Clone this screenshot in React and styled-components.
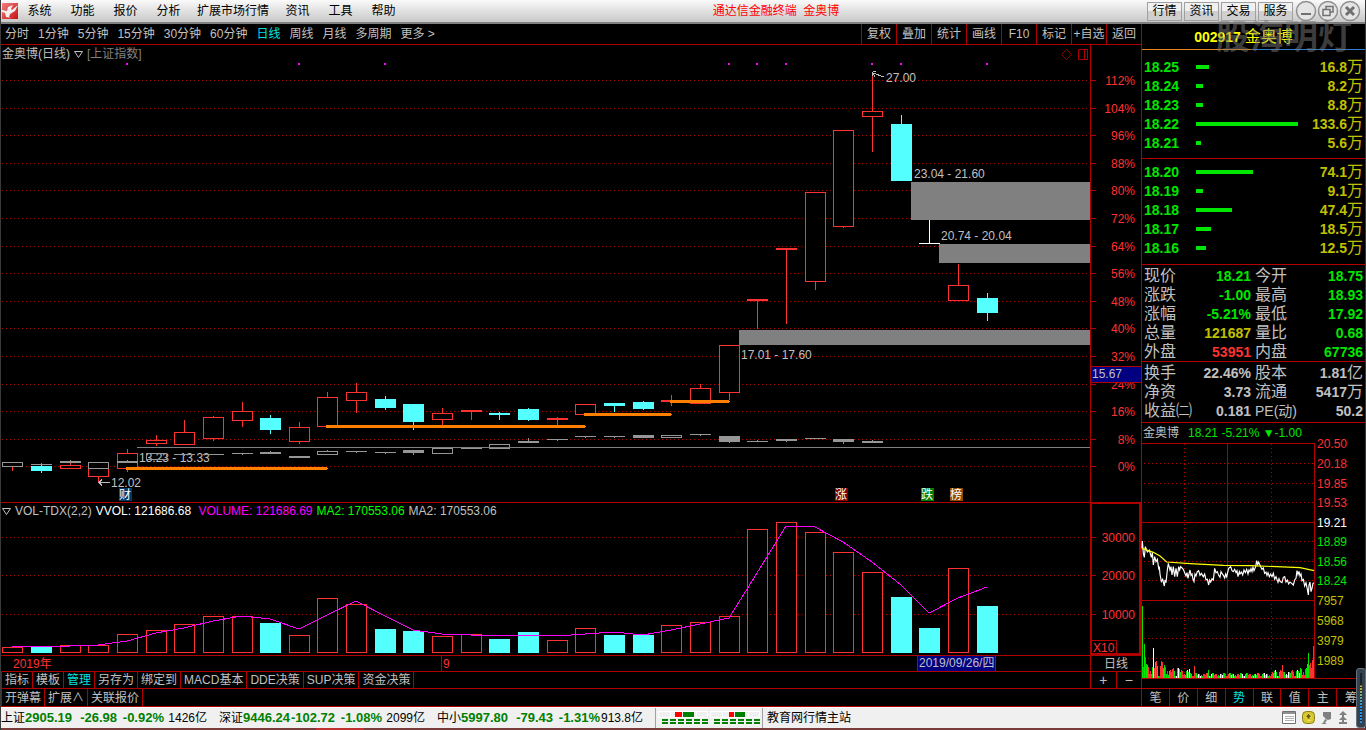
import React, { useState } from 'react';
import styled, { createGlobalStyle } from 'styled-components';

const LINE = '#b00000';
const RED = '#ff3232';
const CYAN = '#54ffff';
const TEXT = '#c0c0c0';
const GREEN = '#00e600';
const YELLOW = '#c0c000';

const GlobalStyle = createGlobalStyle`
  * { box-sizing: border-box; }
  body {
    margin: 0;
    background: #000;
    color: ${TEXT};
    font-family: "Liberation Sans", "Noto Sans CJK SC", sans-serif;
    font-size: 12px;
    line-height: 16px;
  }
  button {
    margin: 0;
    padding: 0;
    border: 0;
    background: none;
    color: inherit;
    font: inherit;
    white-space: nowrap;
    cursor: pointer;
  }
  svg { display: block; }
  table { border-collapse: collapse; }
`;

const Window = styled.div`
  position: relative;
  min-height: 100vh;
  display: flex;
  flex-direction: column;
  border-left: 1px solid #3a3a3a;
  border-right: 1px solid #3a3a3a;
`;

const MenuBar = styled.header`
  display: flex;
  align-items: center;
  height: 24px;
  padding: 0 4px 0 1px;
  border-bottom: 2px solid #808080;
  background: linear-gradient(#fafafa, #c8c8c8);
  color: #000;
`;

const MenuItem = styled.button`
  min-width: 43px;
  height: 20px;
  padding: 0 7px;
`;

const AppTitle = styled.div`
  flex: 1;
  text-align: center;
  color: #ff0000;
`;

const MenuButtons = styled.div`
  display: flex;
  gap: 2px;
  margin-right: 2px;
`;

const MenuButton = styled.button`
  width: 35px;
  height: 19px;
  border: 1px solid #a0a0a0;
  background: linear-gradient(#f0f0f0 50%, #cfcfcf 50%);
`;

const WindowButton = styled.button`
  width: 22px;
  height: 22px;
`;

const Body = styled.main`
  display: flex;
`;

const Left = styled.section`
  flex: 1;
  min-width: 0;
`;

const Right = styled.aside`
  width: 224px;
  border-left: 1px solid ${LINE};
`;

const Toolbar = styled.nav`
  display: flex;
  height: 21px;
  border-bottom: 1px solid ${LINE};
`;

const Periods = styled.div`
  flex: 1;
  display: flex;
  gap: 9px;
  padding-left: 4px;
`;

const Period = styled.button`
  color: ${props => props.$active ? '#00e0e0' : TEXT};
`;

const Tool = styled.button`
  width: 35px;
  border-left: 1px solid ${LINE};
`;

const Panel = styled.div`
  display: flex;
  border-bottom: 1px solid ${LINE};
`;

const Plot = styled.div`
  flex: 1;
  min-width: 0;
`;

const PlotHeader = styled.div`
  display: flex;
  align-items: center;
  height: ${props => props.$height}px;
  gap: 4px;
  padding-left: 1px;
  white-space: pre;
`;

const Colored = styled.span`
  color: ${props => props.$color};
`;

const HeaderIcons = styled.span`
  display: flex;
  gap: 6px;
  margin-left: auto;
  padding-right: 2px;
`;

const Axis = styled.div`
  width: 51px;
  border-left: 1px solid ${LINE};
`;

const VolumeAxis = styled.div`
  width: 51px;
  border: 2px solid ${LINE};
  border-top-width: 1px;
`;

const AxisSvg = styled.svg`
  overflow: visible;
`;

const AxisCell = styled.div`
  display: flex;
  justify-content: center;
  align-items: center;
  width: 51px;
  border-left: 1px solid ${LINE};
`;

const ZoomButton = styled.button`
  flex: 1;
  font-size: 14px;
  & + & { border-left: 1px solid ${LINE}; }
`;

const TimeRow = styled.div`
  display: flex;
  height: 16px;
  border-bottom: 1px solid ${LINE};
`;

const TabRow = styled.div`
  display: flex;
  height: ${props => props.$height}px;
  border-bottom: 1px solid ${LINE};
`;

const Tabs = styled.div`
  flex: 1;
  display: flex;
  border-left: 1px solid ${LINE};
`;

const Tab = styled.button`
  padding: 0 3px;
  border-right: 1px solid ${LINE};
  color: ${props => props.$active ? '#00e0e0' : TEXT};
`;

const StockHeader = styled.h1`
  display: flex;
  justify-content: center;
  align-items: center;
  gap: 4px;
  height: 26px;
  margin: 0;
  padding-right: 20px;
  background: linear-gradient(to right, #e0861a 49%, #2f7fd0 49%) bottom / 100% 1px no-repeat;
  color: #ffff00;
  font-size: 14px;
`;

const StockName = styled.span`
  font-size: 16px;
  font-weight: normal;
`;

const Box = styled.div`
  padding: ${props => props.$pad};
  border-bottom: 1px solid ${LINE};
`;

const DataTable = styled.table`
  width: 100%;
  table-layout: fixed;
  font-size: 14px;
  line-height: 18px;
`;

const Cell = styled.td`
  width: ${props => props.$width || 'auto'};
  height: 19px;
  padding: 0 2px;
  color: ${props => props.$color || TEXT};
  font-weight: bold;
  text-align: ${props => props.$right ? 'right' : 'left'};
  white-space: nowrap;
`;

const Label = styled.th`
  width: ${props => props.$width};
  height: 19px;
  padding: 0 0 0 2px;
  font-size: ${props => props.$latin ? 14 : 16}px;
  font-weight: normal;
  text-align: left;
  white-space: nowrap;
`;

const Unit = styled.span`
  font-size: 16px;
  font-weight: normal;
  line-height: 0;
`;

const Depth = styled.div`
  height: 4px;
  background: ${GREEN};
`;

const MiniHeader = styled.div`
  display: flex;
  align-items: center;
  gap: 9px;
  height: 20px;
  padding-left: 1px;
`;

const SideTabs = styled.div`
  display: flex;
  height: 19px;
  border-top: 1px solid ${LINE};
  border-bottom: 1px solid ${LINE};
`;

const SideTab = styled.button`
  width: 28px;
  border-right: 1px solid ${LINE};
  color: ${props => props.$active ? '#00e0e0' : TEXT};
  &:last-child { border-right: 0; }
`;

const StatusBar = styled.footer`
  display: flex;
  align-items: center;
  height: 21px;
  border-top: 1px solid #fff;
  background: #f0f0f0;
  color: #000;
`;

const IndexQuote = styled.div`
  display: grid;
  grid-template-columns: 24px 46px 46px 47px 43px;
  padding-right: 12px;
  text-align: right;
  white-space: nowrap;
`;

const IndexValue = styled.span`
  color: #008000;
  font-size: 13px;
  font-weight: bold;
`;

const Meters = styled.div`
  height: 20px;
  padding: 3px 2px 0;
  border-left: 1px solid #a0a0a0;
  border-right: 1px solid #a0a0a0;
`;

const Server = styled.span`
  flex: 1;
  padding-left: 4px;
`;

const StatusIcons = styled.div`
  display: flex;
  gap: 5px;
  padding-right: 3px;
`;

const BottomStrip = styled.div`
  height: 2px;
  background: linear-gradient(to right, #7a3b3b 315px, #c03030 315px 363px, #7a3b3b 363px);
`;

const Watermark = styled.div`
  position: absolute;
  top: 14px;
  right: 13px;
  color: rgba(120, 120, 120, 0.5);
  font-size: 34px;
  font-weight: bold;
  line-height: 46px;
  pointer-events: none;
`;

const Gauge = styled.div`
  position: absolute;
  right: -1px;
  bottom: 2px;
  width: 10px;
  height: 60px;
  padding: 4px 3px;
  border: 1px solid #66727e;
  border-radius: 3px;
  background: #35424e;
`;

const GaugeTicks = styled.div`
  height: 50px;
  background:
    repeating-linear-gradient(transparent 0 2px, #1a232b 2px 3px),
    linear-gradient(#1a232b 12px, #d0b020 13px, #5ab0a0 26px, #2090e8 34px);
`;

const menus = ['系统', '功能', '报价', '分析', '扩展市场行情', '资讯', '工具', '帮助'];
const menuButtons = ['行情', '资讯', '交易', '服务'];
const periods = ['分时', '1分钟', '5分钟', '15分钟', '30分钟', '60分钟', '日线', '周线', '月线', '多周期', '更多 >'];
const tools = ['复权', '叠加', '统计', '画线', 'F10', '标记', '+自选', '返回'];
const indicatorTabs = ['指标', '模板', '管理', '另存为', '绑定到', 'MACD基本', 'DDE决策', 'SUP决策', '资金决策'];
const extraTabs = ['开弹幕', '扩展∧', '关联报价'];
const sideTabs = ['笔', '价', '细', '势', '联', '值', '主', '筹'];

// kind, body top, body bottom, high, low
const candles = [
  ['r', 462, 466, 462, 470], ['c', 466, 470, 464, 472], ['r', 465, 468, 462, 468], ['r', 462, 476, 462, 482],
  ['r', 453, 468, 449, 471], ['r', 440, 443, 435, 445], ['r', 432, 444, 420, 444], ['r', 417, 438, 416, 440],
  ['r', 411, 420, 402, 426], ['c', 418, 429, 415, 433], ['r', 427, 441, 422, 443], ['r', 397, 426, 392, 426],
  ['r', 392, 400, 383, 412], ['c', 399, 407, 396, 409], ['c', 404, 421, 404, 429], ['r', 413, 419, 408, 425],
  ['r', 410, 411, 410, 419], ['c', 413, 414, 412, 419], ['c', 409, 419, 408, 420], ['r', 418, 419, 417, 425],
  ['r', 404, 414, 404, 414], ['c', 403, 405, 403, 411], ['c', 402, 408, 401, 409], ['r', 400, 401, 395, 405],
  ['r', 388, 403, 384, 403], ['r', 345, 392, 345, 399], ['r', 299, 300, 299, 328], ['r', 248, 249, 248, 323],
  ['r', 192, 281, 192, 289], ['r', 130, 226, 130, 227], ['r', 111, 116, 72, 151], ['c', 124, 180, 115, 180],
  ['w', 243, 243, 220, 243], ['r', 285, 300, 264, 300], ['c', 298, 312, 293, 320],
];

// the overlaid index: h = hollow, f = filled
const indexCandles = [
  ['h', 462, 466, 462, 466], ['f', 464, 464, 463, 464], ['f', 461, 462, 460, 462], ['h', 462, 468, 462, 468],
  ['f', 461, 462, 460, 462], ['h', 453, 459, 453, 459], ['f', 454, 454, 454, 455], ['f', 454, 454, 454, 454],
  ['f', 453, 453, 453, 454], ['f', 452, 453, 451, 453], ['f', 456, 457, 456, 457], ['h', 451, 454, 450, 454],
  ['f', 451, 451, 451, 452], ['f', 452, 452, 452, 453], ['f', 450, 452, 450, 454], ['h', 448, 453, 448, 453],
  ['f', 448, 448, 448, 448], ['h', 444, 448, 444, 448], ['f', 441, 442, 438, 442], ['f', 439, 439, 439, 440],
  ['f', 436, 436, 436, 437], ['f', 436, 436, 436, 437], ['f', 435, 437, 435, 437], ['h', 435, 437, 435, 437],
  ['f', 434, 434, 434, 435], ['f', 436, 441, 436, 442], ['f', 441, 441, 440, 441], ['f', 439, 440, 439, 441],
  ['f', 438, 438, 438, 438], ['f', 439, 441, 439, 443], ['f', 441, 442, 440, 442],
];

const volumeTops = [
  647, 646, 645, 645, 634, 630, 624, 616, 616, 623, 635, 598, 604, 629, 631, 636, 634, 639,
  632, 640, 628, 635, 635, 625, 622, 616, 529, 522, 532, 552, 572, 597, 628, 568, 606,
];

const volumeAverage = [
  646, 647, 646, 645, 641, 633, 628, 621, 616, 619, 629, 615, 601, 616, 630, 634, 635, 636,
  635, 636, 634, 632, 635, 630, 624, 618, 573, 526, 527, 542, 562, 585, 613, 598, 587,
];

const percentLines = [80, 108, 135, 163, 190, 218, 246, 273, 301, 328, 356, 384, 411, 439, 466];
const volumeLines = [[537, '30000'], [575, '20000'], [614, '10000']];
const signalDots = [4, 10, 13, 25, 26, 27, 30, 31, 34];
const gaps = [[911, 182, 38], [939, 244, 19], [739, 330, 15], [137, 447, 1]];
const supports = [[126, 327, 467], [326, 585, 425], [584, 671, 413], [670, 729, 400]];
const priceNotes = [
  [886, 82, '27.00'], [914, 178, '23.04 - 21.60'], [941, 240, '20.74 - 20.04'],
  [741, 359, '17.01 - 17.60'], [139, 462, '13.23 - 13.33'], [111, 487, '12.02'],
];
const badges = [[119, '#00386b', '财'], [835, '#800000', '涨'], [921, '#008000', '跌'], [950, '#904800', '榜']];

const asks = [['18.25', 13, '16.8'], ['18.24', 7, '8.2'], ['18.23', 7, '8.8'], ['18.22', 102, '133.6'], ['18.21', 5, '5.6']];
const bids = [['18.20', 57, '74.1'], ['18.19', 7, '9.1'], ['18.18', 36, '47.4'], ['18.17', 15, '18.5'], ['18.16', 10, '12.5']];

const quotes = [
  ['现价', '18.21', GREEN, '今开', '18.75', GREEN],
  ['涨跌', '-1.00', GREEN, '最高', '18.93', GREEN],
  ['涨幅', '-5.21%', GREEN, '最低', '17.92', GREEN],
  ['总量', '121687', YELLOW, '量比', '0.68', GREEN],
  ['外盘', '53951', RED, '内盘', '67736', GREEN],
];

const basics = [
  ['换手', '22.46%', TEXT, '股本', '1.81', TEXT, '亿'],
  ['净资', '3.73', TEXT, '流通', '5417', TEXT, '万'],
  ['收益㈡', '0.181', TEXT, 'PE(动)', '50.2', TEXT],
];

const indexes = [
  ['上证', '2905.19', '-26.98', '-0.92%', '1426亿'],
  ['深证', '9446.24', '-102.72', '-1.08%', '2099亿'],
  ['中小', '5997.80', '-79.43', '-1.31%', '913.8亿'],
];

const slotX = i => Math.floor(12.684 + i * 28.665);

const DottedLine = ({ y, x2 = '100%' }) => (
  <line x1="2" x2={x2} y1={y + 0.5} y2={y + 0.5} stroke={LINE} strokeDasharray="1 3" />
);

const Candle = ({ i, data, color, hollow }) => {
  const [, top, bottom, high, low] = data;
  const x = slotX(i);
  const isHollow = hollow && bottom - top > 1;
  return (
    <g fill={color}>
      {high < top && <rect x={x} y={high} width="1" height={top - high} />}
      {low > bottom && <rect x={x} y={bottom} width="1" height={low - bottom + 1} />}
      {isHollow
        ? <rect x={x - 9.5} y={top + 0.5} width="20" height={bottom - top} fill={color === RED ? '#000' : 'none'} stroke={color} />
        : <rect x={x - 10} y={top} width="21" height={bottom - top + 1} />}
    </g>
  );
};

const PriceChart = () => (
  <svg width="100%" height="439" shapeRendering="crispEdges">
    <g transform="translate(-1 -63)">
      {percentLines.map(y => <DottedLine key={y} y={y} />)}
      {signalDots.map(i => <rect key={i} x={slotX(i) - 1} y="63" width="2" height="2" fill="#ff00ff" />)}
      {priceNotes.map(([x, y, label]) => <text key={label} x={x} y={y} fill={TEXT}>{label}</text>)}
      {candles.map((c, i) => (
        <Candle key={i} i={i} data={c} color={{ r: RED, c: CYAN, w: '#fff' }[c[0]]} hollow={c[0] === 'r'} />
      ))}
      {indexCandles.map((c, i) => <Candle key={i} i={i} data={c} color="#969696" hollow={c[0] === 'h'} />)}
      {gaps.map(([x, y, h]) => <rect key={y} x={x} y={y} width="100%" height={h} fill="#808080" />)}
      {supports.map(([x1, x2, y]) => (
        <g key={y} fill="#ff8000">
          <rect x={x1} y={y} width={x2 - x1} height="3" />
          <rect x={x2} y={y + 1} width="1" height="1" />
        </g>
      ))}
      <path d="M99 482.5h11M102 479.5l-3 3 3 3M873 73l11 4M872.5 72v4M873 71.500h3M873 73l2 4" fill="none" stroke={TEXT} />
      {badges.map(([x, color, label]) => (
        <g key={label}>
          <rect x={x} y="488" width="13" height="13" fill={color} />
          <text x={x} y="499" fill="#fff">{label}</text>
        </g>
      ))}
    </g>
  </svg>
);

const PercentAxis = () => (
  <AxisSvg width="50" height="457">
    <g transform="translate(-1 -45)">
      {percentLines.map((y, i) => (
        <g key={y}>
          <rect x="0" y={y} width="6" height="1" fill={LINE} />
          <text x="45" y={y + 5} fill={RED} textAnchor="end">{112 - i * 8}%</text>
        </g>
      ))}
      <rect x="0.500" y="366.500" width="51" height="16" fill="#000080" stroke={LINE} />
      <text x="2" y="378" fill={TEXT}>15.67</text>
    </g>
  </AxisSvg>
);

const VolumeChart = () => (
  <svg width="100%" height="136" shapeRendering="crispEdges">
    <g transform="translate(-1 -519)">
      {volumeLines.map(([y]) => <DottedLine key={y} y={y} />)}
      {volumeTops.map((top, i) => candles[i][0] === 'r'
        ? <rect key={i} x={slotX(i) - 9.5} y={top + 0.5} width="20" height={652 - top} fill="#000" stroke={RED} />
        : <rect key={i} x={slotX(i) - 10} y={top} width="21" height={653 - top} fill={CYAN} />)}
      <polyline points={volumeAverage.map((y, i) => `${slotX(i)},${y}`).join(' ')} fill="none" stroke="#ff00ff" />
    </g>
  </svg>
);

const VolumeScale = () => (
  <AxisSvg width="47" height="149">
    <g transform="translate(-2 -504)">
      {volumeLines.map(([y, label]) => (
        <g key={y}>
          <rect x="0" y={y} width="6" height="1" fill={LINE} />
          <text x="45" y={y + 5} fill={RED} textAnchor="end">{label}</text>
        </g>
      ))}
      <path d="M0 640.5h26.500v14" fill="none" stroke={LINE} />
      <text x="3" y="652" fill={RED}>X10</text>
    </g>
  </AxisSvg>
);

const TimeAxis = () => (
  <svg width="100%" height="15">
    <text x="12" y="12" fill={RED}>2019年</text>
    <rect x="440" y="0" width="1" height="15" fill={LINE} />
    <text x="442" y="12" fill={RED}>9</text>
    <rect x="916.5" y="-0.5" width="78" height="16" fill="#000080" stroke={LINE} />
    <text x="918" y="11" fill={TEXT}>2019/09/26/四</text>
  </svg>
);

const minutePrices = [
  156, 385, 157, 363, 160, 400, 163, 412, 166, 380, 172, 396, 178, 390, 184, 412, 187, 398, 190, 435, 194, 410,
  198, 425, 202, 418, 206, 445, 208, 440, 210, 462, 214, 485, 218, 478, 223, 498, 225, 480, 228, 488, 232, 450,
  235, 430, 240, 450, 243, 440, 246, 465, 250, 440, 254, 470, 258, 445, 262, 470, 266, 440, 269, 450, 272, 440,
  280, 448, 284, 458, 288, 468, 291, 458, 294, 475, 297, 462, 300, 450, 303, 466, 306, 462, 309, 478, 312, 485,
  315, 462, 318, 468, 322, 455, 326, 452, 330, 466, 334, 460, 340, 470, 344, 462, 348, 480, 352, 478, 356, 495,
  359, 480, 362, 486, 366, 476, 370, 480, 374, 445, 378, 458, 382, 455, 386, 466, 390, 472, 393, 455, 396, 460,
  400, 466, 404, 474, 407, 462, 410, 470, 416, 445, 422, 440, 426, 452, 430, 455, 434, 448, 438, 458, 441, 452,
  444, 470, 448, 455, 450, 462, 454, 456, 458, 465, 462, 450, 466, 458, 470, 448, 474, 462, 477, 450, 480, 455,
  483, 446, 486, 455, 489, 442, 492, 452, 497, 440, 500, 422, 503, 434, 506, 426, 512, 440, 516, 448, 520, 444,
  524, 460, 528, 456, 531, 466, 534, 458, 538, 470, 542, 462, 546, 470, 550, 460, 554, 478, 558, 470, 564, 487,
  567, 476, 570, 484, 576, 488, 580, 472, 584, 470, 588, 486, 592, 480, 596, 492, 600, 486, 605, 490, 610, 495,
  614, 480, 618, 475, 621, 452, 624, 464, 627, 454, 630, 468, 633, 462, 636, 482, 640, 478, 644, 498, 648, 488,
  652, 508, 655, 525, 657, 495, 660, 486, 663, 515, 666, 505, 669, 490, 672, 488,
];

// minute volumes, with the opening and closing peaks given one by one
const peaks = { 0: 72, 1: 11, 2: 34, 3: 21, 4: 14, 11: 30, 35: 10, 52: 12, 66: 8, 140: 13, 154: 7, 165: 14, 166: 25, 167: 13, 168: 15, 169: 10, 170: 18, 171: 32 };
const minuteVolumes = Array.from({ length: 172 }, (_, i) => {
  const noise = (i * 7919 + i * i * 31) % 17 / 17;
  const size = i < 26 ? 16 : i < 48 ? 8 : i < 130 ? 3 : i < 158 ? 6 : 12;
  const tone = (i * 13 + i * i * 5) % 11;
  return {
    h: peaks[i] || Math.round(2 + noise * size),
    color: i === 11 || (tone === 7 && i > 26 && i < 160) ? '#fff' : i === 0 || i === 2 || i === 166 || (tone < 5 && i < 167) ? GREEN : RED,
  };
});

const miniLabels = [
  [443, '20.50', RED], [463, '20.18', RED], [483, '19.85', RED], [502, '19.53', RED], [522, '19.21', '#fff'],
  [541, '18.89', GREEN], [561, '18.56', GREEN], [580, '18.24', GREEN],
  [600, '7957', YELLOW], [620, '5968', YELLOW], [640, '3979', YELLOW], [660, '1989', YELLOW],
];

const MinuteChart = () => (
  <AxisSvg width="100%" height="245">
    <g transform="translate(0 -443)">
      <g shapeRendering="crispEdges">
        {[463, 483, 502, 541, 561, 580, 618, 638, 658].map(y => <DottedLine key={y} y={y} x2={172} />)}
        {[42, 129].map(x => <line key={x} x1={x + 0.5} x2={x + 0.5} y1="444" y2="678" stroke={LINE} strokeDasharray="1 3" />)}
        {[443, 522, 600].map(y => <rect key={y} x="0" y={y} width="173" height="1" fill={LINE} />)}
        <rect x="0" y="678" width="100%" height="1" fill={LINE} />
        <rect x="85" y="443" width="1" height="235" fill={LINE} />
        {minuteVolumes.map((v, i) => <rect key={i} x={i} y={678 - v.h} width="1" height={v.h} fill={v.color} />)}
        <rect x="172" y="443" width="1" height="235" fill={LINE} />
      </g>
      <g transform="translate(-52 420) scale(0.33333)" fill="none" strokeWidth="3.500">
        <polyline points={minutePrices.join(' ')} stroke="#fff" />
        <polyline points="156,385 190,397 210,408 230,426 300,431 400,436 480,437 560,440 630,443 672,452" stroke="#ffff00" />
      </g>
      {miniLabels.map(([y, label, color]) => <text key={label} x="175" y={y + 5} fill={color}>{label}</text>)}
    </g>
  </AxisSvg>
);

const Logo = () => (
  <svg width="16" height="16" viewBox="0 0 16 16">
    <defs>
      <linearGradient id="logo" x2="1" y2="1">
        <stop offset="0" stopColor="#f08080" />
        <stop offset="1" stopColor="#c81010" />
      </linearGradient>
    </defs>
    <rect width="16" height="16" fill="url(#logo)" />
    <path d="M0 7l5 1 1-4 5-2-2 4 1 1 6-5-3 6-5 3-1 3 2 1-5-1-1-4-3-1z" fill="#f4eeee" />
  </svg>
);

const RoundIcon = ({ children }) => (
  <svg width="22" height="22" viewBox="0 0 22 22" fill="none" stroke="#707070">
    <circle cx="11" cy="11" r="9.500" stroke="#909090" strokeWidth="1.500" fill="#e4e4e4" />
    {children}
  </svg>
);

const MeterIcon = () => (
  <svg width="102" height="14" shapeRendering="crispEdges">
    {[[0, 17, 7, 25, 11], [52, 71, 5, 77, 10]].map(([x, redX, redW, greenX, greenW]) => (
      <g key={x}>
        <rect x={x + 0.5} y="0.5" width="49" height="6" fill="#f0f0f0" stroke="#fff" />
        <path d={`M${x + 12.5} 0v7M${x + 38.5} 0v7`} stroke="#fff" />
        <rect x={redX} y="1" width={redW} height="5" fill="#ff0000" />
        <rect x={greenX} y="1" width={greenW} height="5" fill="#008000" />
        {[0, 1, 2, 3, 4, 5].map(n => (
          <g key={n} fill="#008000">
            <rect x={x + 4 + n * 8} y="8" width="6" height="2" />
            <rect x={x + 4 + n * 8} y="11" width="6" height="2" />
          </g>
        ))}
      </g>
    ))}
  </svg>
);

const OrderTable = ({ rows }) => (
  <DataTable>
    <tbody>
      {rows.map(([price, width, amount]) => (
        <tr key={price}>
          <Cell $width="53px" $color={GREEN}>{price}</Cell>
          <td><Depth style={{ width }} /></td>
          <Cell $width="66px" $color={YELLOW} $right>{amount}<Unit>万</Unit></Cell>
        </tr>
      ))}
    </tbody>
  </DataTable>
);

const QuoteTable = ({ rows }) => (
  <DataTable>
    <tbody>
      {rows.map(([label, value, color, label2, value2, color2, unit]) => (
        <tr key={label}>
          <Label $width="52px">{label}</Label>
          <Cell $width="59px" $color={color} $right>{value}</Cell>
          <Label $width="46px" $latin={label2.startsWith('PE')}>{label2}</Label>
          <Cell $color={color2} $right>{value2}{unit && <Unit>{unit}</Unit>}</Cell>
        </tr>
      ))}
    </tbody>
  </DataTable>
);

export default function App() {
  const [period, setPeriod] = useState('日线');
  const [tab, setTab] = useState('管理');
  const [sideTab, setSideTab] = useState('势');

  return (
    <Window>
      <GlobalStyle />
      <MenuBar>
        <Logo />
        {menus.map(name => <MenuItem key={name}>{name}</MenuItem>)}
        <AppTitle>通达信金融终端&nbsp; 金奥博</AppTitle>
        <MenuButtons>
          {menuButtons.map(name => <MenuButton key={name}>{name}</MenuButton>)}
        </MenuButtons>
        <WindowButton aria-label="最小化"><RoundIcon><path d="M6 14h10" strokeWidth="2" /></RoundIcon></WindowButton>
        <WindowButton aria-label="还原">
          <RoundIcon><path d="M9 9V6.500h7V12h-3M6 9.500h7v6H6z" strokeWidth="1.500" /></RoundIcon>
        </WindowButton>
        <WindowButton aria-label="关闭"><RoundIcon><path d="M7 7l8 8M15 7l-8 8" strokeWidth="3" /></RoundIcon></WindowButton>
      </MenuBar>

      <Body>
        <Left>
          <Toolbar>
            <Periods>
              {periods.map(name => (
                <Period key={name} $active={name === period} onClick={() => setPeriod(name)}>{name}</Period>
              ))}
            </Periods>
            {tools.map(name => <Tool key={name}>{name}</Tool>)}
          </Toolbar>

          <Panel>
            <Plot>
              <PlotHeader $height={18}>
                <span>金奥博(日线)</span>
                <svg width="9" height="9"><path d="M0.500 1.500h8l-4 6z" fill="none" stroke={TEXT} /></svg>
                <Colored $color="#808080">[上证指数]</Colored>
                <HeaderIcons>
                  <svg width="11" height="11"><path d="M5.500 0.500l5 5-5 5-5-5z" fill="none" stroke="#900000" /></svg>
                  <svg width="10" height="11"><path d="M0.500 0.500h9v10h-9zM6.500 0v11" fill="none" stroke={LINE} /></svg>
                </HeaderIcons>
              </PlotHeader>
              <PriceChart />
            </Plot>
            <Axis><PercentAxis /></Axis>
          </Panel>

          <Panel>
            <Plot>
              <PlotHeader $height={16}>
                <svg width="9" height="9"><path d="M0.500 1.500h8l-4 6z" fill="none" stroke={TEXT} /></svg>
                <span>VOL-TDX(2,2)</span>
                <Colored $color="#fff">VVOL: 121686.68 </Colored>
                <Colored $color="#ff00ff">VOLUME: 121686.69</Colored>
                <Colored $color="#00ff00">MA2: 170553.06</Colored>
                <span>MA2: 170553.06</span>
              </PlotHeader>
              <VolumeChart />
            </Plot>
            <VolumeAxis><VolumeScale /></VolumeAxis>
          </Panel>

          <TimeRow>
            <Plot><TimeAxis /></Plot>
            <AxisCell>日线</AxisCell>
          </TimeRow>
          <TabRow $height={17}>
            <Tabs>
              {indicatorTabs.map(name => (
                <Tab key={name} $active={name === tab} onClick={() => setTab(name)}>{name}</Tab>
              ))}
            </Tabs>
            <AxisCell>
              <ZoomButton aria-label="放大">+</ZoomButton>
              <ZoomButton aria-label="缩小">−</ZoomButton>
            </AxisCell>
          </TabRow>
          <TabRow $height={18}>
            <Tabs>
              {extraTabs.map(name => <Tab key={name}>{name}</Tab>)}
            </Tabs>
          </TabRow>
        </Left>

        <Right>
          <StockHeader>002917 <StockName>金奥博</StockName></StockHeader>
          <Box $pad="7px 0 6px"><OrderTable rows={asks} /></Box>
          <Box $pad="3px 0 7px"><OrderTable rows={bids} /></Box>
          <Box $pad="1px 0 0"><QuoteTable rows={quotes} /></Box>
          <Box $pad="1px 0 2px"><QuoteTable rows={basics} /></Box>
          <MiniHeader>
            <span>金奥博</span>
            <Colored $color={GREEN}>18.21 -5.21% ▼-1.00</Colored>
          </MiniHeader>
          <MinuteChart />
          <SideTabs>
            {sideTabs.map(name => (
              <SideTab key={name} $active={name === sideTab} onClick={() => setSideTab(name)}>{name}</SideTab>
            ))}
          </SideTabs>
        </Right>
      </Body>

      <StatusBar>
        {indexes.map(([name, price, change, percent, amount]) => (
          <IndexQuote key={name}>
            <span>{name}</span>
            <IndexValue>{price}</IndexValue>
            <IndexValue>{change}</IndexValue>
            <IndexValue>{percent}</IndexValue>
            <span>{amount}</span>
          </IndexQuote>
        ))}
        <Meters><MeterIcon /></Meters>
        <Server>教育网行情主站</Server>
        <StatusIcons>
          <svg width="15" height="14">
            <path d="M0.500 0.500h13v12h-13z" fill="#fff" stroke="#707070" />
            <path d="M1 2h12" stroke="#909090" strokeWidth="2" />
            <path d="M3 5.500h9M3 7.500h9M3 9.500h9" stroke="#b0b0b0" />
          </svg>
          <svg width="13" height="14">
            <rect x="0.500" y="0.500" width="12" height="12" rx="4" fill="#d8c830" stroke="#8a8010" />
            <path d="M3 6l3.500-3.500L10 6H8v2H5V6zM5 9.500h4" fill="#706000" stroke="#fff890" strokeWidth="0.500" />
          </svg>
          <svg width="13" height="14" fill="#808080">
            <path d="M3 1l8 0v7l-3 1-2-1-3-3zM5 8l2 1-2 3 2 1H1l2-1z" />
          </svg>
          <svg width="10" height="14" fill="#808080">
            <path d="M5 0l4 4H6v2H4V4H1zM5 5l4 4H6v4H4V9H1zM1 11h8v2H1z" />
          </svg>
          <svg width="9" height="14" fill="#808080"><path d="M3 1h4v5H4zM4 8h4v4H5z" /></svg>
        </StatusIcons>
      </StatusBar>
      <BottomStrip />
      <Watermark>股海明灯</Watermark>
      <Gauge><GaugeTicks /></Gauge>
    </Window>
  );
}
